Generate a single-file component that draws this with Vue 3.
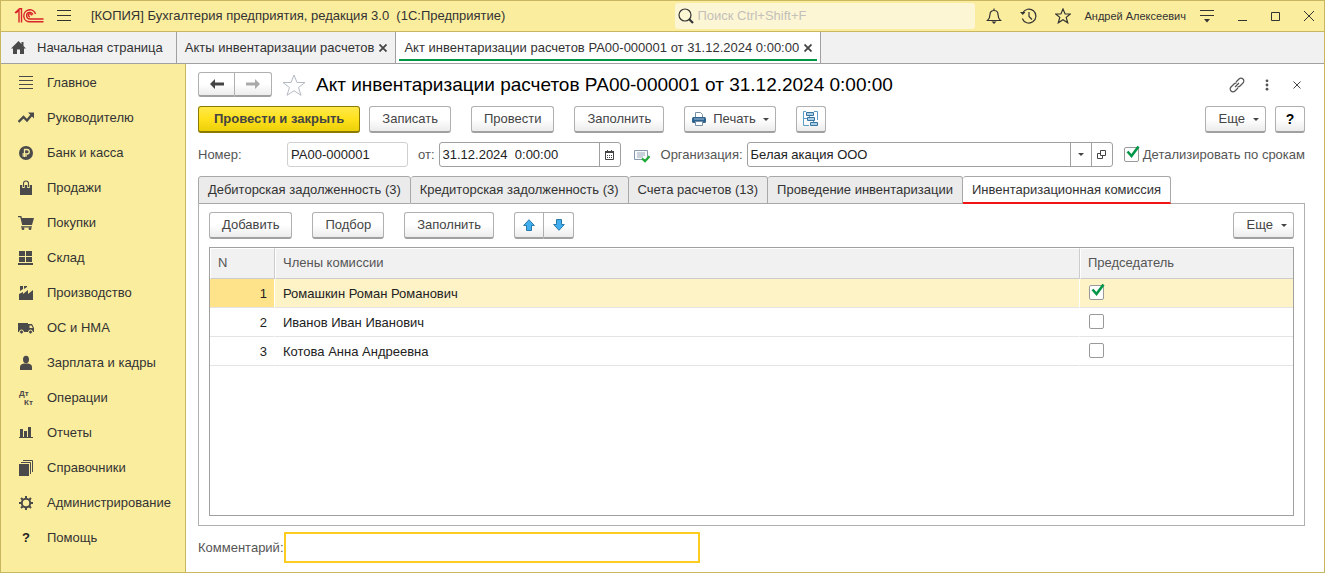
<script setup>
import { ref } from 'vue'

const sections = [
  { title: 'Главное', icon: '<path d="M1 1.5h14M1 5.5h14M1 9.5h14M1 13.5h14" stroke="#4a4a4a" fill="none"/>' },
  { title: 'Руководителю', icon: '<path d="M0.5 12L5.5 7l3.500 3.500L14 4.500" stroke="#4a4a4a" stroke-width="2.400" fill="none"/><path d="M10 2.500h6v6z"/>' },
  { title: 'Банк и касса', icon: '<circle cx="8" cy="8" r="7"/><path d="M6.500 12V4.500H9a2.200 2.200 0 0 1 0 4.500H4.500M4.500 10.800H9" stroke="#fbed9e" stroke-width="1.300" fill="none"/>' },
  { title: 'Продажи', icon: '<path d="M2 5h12v10H2z"/><path d="M5.500 8V3.500Q5.500 1 8 1t2.500 2.500V8" stroke="#fbed9e" stroke-width="2.600" fill="none"/><path d="M5.500 7V3.500Q5.500 1 8 1t2.500 2.500V7" stroke="#4a4a4a" stroke-width="1.100" fill="none"/>' },
  { title: 'Покупки', icon: '<path d="M0 1h3.300l.7 2h12l-2 7H4.200L2.300 2.200H0zM3 11.300h11v1.200H3z"/><circle cx="5" cy="13.700" r="1.400"/><circle cx="12" cy="13.700" r="1.400"/>' },
  { title: 'Склад', icon: '<path d="M1 1h6v5H1zM8 1h6v5H8zM1 7h6v5H1zM8 7h6v5H8zM0 13h15v2H0z"/>' },
  { title: 'Производство', icon: '<path d="M1 15V9l4-2v2l5-4v4l5-4v10zM2 1h3v3L2 6zM6 1h3v1L6 4z"/>' },
  { title: 'ОС и НМА', icon: '<path d="M0 3h10v9H0z"/><path d="M10 4h4l2 4v4h-6z"/><path d="M11.500 5.500h2L14.800 8h-3.300z" fill="#fbed9e"/><g stroke="#fbed9e" stroke-width="1"><circle cx="3.500" cy="12" r="2"/><circle cx="12.500" cy="12" r="2"/></g>' },
  { title: 'Зарплата и кадры', icon: '<ellipse cx="8" cy="4.500" rx="3" ry="3.800"/><path d="M2 15v-3q0-3 4-3.500h4q4 .5 4 3.500v3z"/>' },
  { title: 'Операции', icon: '<text x="1" y="6" font-size="8" font-weight="bold" font-family="Liberation Sans, sans-serif">Дт</text><text x="6" y="15" font-size="8" font-weight="bold" font-family="Liberation Sans, sans-serif">Кт</text>' },
  { title: 'Отчеты', icon: '<path d="M2 4h3v8H2zM6 6h3v6H6zM10 2h3v10h-3zM1 12h14v1H1z"/>' },
  { title: 'Справочники', icon: '<path d="M1 4h10v12H1z"/><path d="M3 2.500h9.500V14M5 .5h9.500V12" stroke="#4a4a4a" fill="none"/>' },
  { title: 'Администрирование', icon: '<circle cx="8" cy="8" r="4.200" stroke="#4a4a4a" stroke-width="2" fill="none"/><path d="M8 1v2.500M8 12.500V15M1 8h2.500M12.500 8H15M3 3l2 2M11 11l2 2M13 3l-2 2M5 11l-2 2" stroke="#4a4a4a" stroke-width="2" fill="none"/>' },
  { title: 'Помощь', glyph: '?' },
]

const tabs = [
  'Дебиторская задолженность (3)',
  'Кредиторская задолженность (3)',
  'Счета расчетов (13)',
  'Проведение инвентаризации',
  'Инвентаризационная комиссия',
]
const activeTab = ref(4)

const members = ref([
  { name: 'Ромашкин Роман Романович', chair: true },
  { name: 'Иванов Иван Иванович', chair: false },
  { name: 'Котова Анна Андреевна', chair: false },
])
const selected = ref(0)

const number = ref('РА00-000001')
const date = ref('31.12.2024  0:00:00')
const organization = ref('Белая акация ООО')
const detailed = ref(true)
const comment = ref('')
const search = ref('')
</script>

<template>
  <div class="window">
    <header class="topbar">
      <svg class="logo" width="30" height="16" viewBox="0 0 30 16" fill="none" stroke="#d8232a" stroke-width="1.400">
        <path d="M1 4.500h1.500L5 2v12.500M7.500 14.500V.8H5.500L1 5" />
        <path d="M21.500 6A6 6 0 1 0 16 13.800h13.500M19 6.500A3.300 3.300 0 1 0 16 11h13.500" />
        <path d="M17.500 7.500a1.500 1.500 0 1 0-1.500 1.200" />
      </svg>
      <button class="icon-btn menu" aria-label="Меню">
        <svg width="14" height="12" viewBox="0 0 14 12" stroke="#333"><path d="M0 .5h14M0 5.500h14M0 10.500h14" /></svg>
      </button>
      <div class="app-title">[КОПИЯ] Бухгалтерия предприятия, редакция 3.0&nbsp; (1С:Предприятие)</div>
      <label class="search">
        <svg width="16" height="16" viewBox="0 0 16 16" fill="none" stroke="#333"><circle cx="7" cy="7" r="6" stroke-width="1.200" /><path d="M11 11l4 4" stroke-width="2.200" /></svg>
        <input v-model="search" type="text" aria-label="Поиск" placeholder="Поиск Ctrl+Shift+F">
      </label>
      <div class="top-actions">
        <button class="icon-btn" aria-label="Уведомления">
          <svg width="16" height="16" viewBox="0 0 16 16" fill="none" stroke="#333" stroke-width="1.200"><path d="M1.500 12.500c2-2 2.500-3 2.500-6C4 4 5.500 2.500 8 2.500S12 4 12 6.500c0 3 .5 4 2.500 6zM8 .5v2" /><path d="M5.500 13.500h5L8 16z" fill="#333" stroke="none" /></svg>
        </button>
        <button class="icon-btn" aria-label="История">
          <svg width="17" height="16" viewBox="0 0 17 16" fill="none" stroke="#333" stroke-width="1.200"><path d="M2.600 5A7 7 0 1 1 2.300 10.500M9 4v4.500l3 3" /><path d="M0 4h5.500L2.800 7z" fill="#333" stroke="none" /></svg>
        </button>
        <button class="icon-btn" aria-label="Избранное">
          <svg width="16" height="16" viewBox="0 0 16 16" fill="none" stroke="#333" stroke-width="1.200"><path d="M8 1l2.100 5H15.300L11.200 9.400l1.500 5.400L8 11.700l-4.700 3.100 1.500-5.400L.7 6h5.200z" /></svg>
        </button>
      </div>
      <button class="icon-btn user">Андрей Алексеевич</button>
      <div class="window-actions">
        <button class="icon-btn" aria-label="Настройки">
          <svg width="14" height="14" viewBox="0 0 14 14"><path d="M0 1.500h14M0 6.500h14" stroke="#333" /><path d="M4 10h6l-3 3.500z" fill="#333" /></svg>
        </button>
        <button class="icon-btn" aria-label="Свернуть">
          <svg width="9" height="10" viewBox="0 0 9 10"><path d="M0 9.500h9" stroke="#333" /></svg>
        </button>
        <button class="icon-btn" aria-label="Развернуть">
          <svg width="9" height="9" viewBox="0 0 9 9"><path d="M.5.500h8v8h-8z" fill="none" stroke="#333" /></svg>
        </button>
        <button class="icon-btn" aria-label="Закрыть">
          <svg width="10" height="10" viewBox="0 0 10 10"><path d="M0 0l10 10M10 0L0 10" stroke="#333" /></svg>
        </button>
      </div>
    </header>

    <nav class="pages">
      <button class="page home">
        <svg width="16" height="14" viewBox="0 0 16 14" fill="#4a4a4a"><path d="M7.500 0L0 7.500h2V13h4V8.500h3V13h4V7.500h2L12.500 5V1h-2v2z" /></svg>
        <span>Начальная страница</span>
      </button>
      <div class="page">
        <button class="page-title">Акты инвентаризации расчетов</button>
        <button class="close" aria-label="Закрыть вкладку"><svg width="8" height="8" viewBox="0 0 8 8"><path d="M.5.500l7 7M7.500.500l-7 7" stroke="#444" stroke-width="1.800" /></svg></button>
      </div>
      <div class="page current">
        <button class="page-title">Акт инвентаризации расчетов РА00-000001 от 31.12.2024 0:00:00</button>
        <button class="close" aria-label="Закрыть вкладку"><svg width="8" height="8" viewBox="0 0 8 8"><path d="M.5.500l7 7M7.500.500l-7 7" stroke="#444" stroke-width="1.800" /></svg></button>
      </div>
    </nav>

    <div class="body">
      <aside class="sidebar">
        <a v-for="s in sections" :key="s.title" href="#" class="section">
          <span v-if="s.glyph" class="glyph">{{ s.glyph }}</span>
          <svg v-else width="16" height="16" viewBox="0 0 16 16" fill="#4a4a4a" v-html="s.icon"></svg>
          <span>{{ s.title }}</span>
        </a>
      </aside>

      <main class="form">
        <div class="form-head">
          <div class="pair nav">
            <button class="btn" aria-label="Назад"><svg width="14" height="10" viewBox="0 0 14 10" fill="#444"><path d="M0 5l5-5v3.500h9v3H5V10z" /></svg></button>
            <button class="btn" aria-label="Вперед"><svg width="14" height="10" viewBox="0 0 14 10" fill="#aaa"><path d="M14 5L9 0v3.500H0v3h9V10z" /></svg></button>
          </div>
          <button class="icon-btn fav" aria-label="В избранное">
            <svg width="24" height="22" viewBox="0 0 24 22" fill="none" stroke="#b4bac2"><path d="M12 1l3 7.500h8l-6.500 5L19 21.300l-7-4.600-7 4.600 2.500-7.800L1 8.500h8z" /></svg>
          </button>
          <h1>Акт инвентаризации расчетов РА00-000001 от 31.12.2024 0:00:00</h1>
          <div class="head-actions">
            <button class="icon-btn" aria-label="Ссылка">
              <svg width="16" height="16" viewBox="0 0 16 16" fill="none" stroke="#555" stroke-width="1.200"><path d="M7 5l3-3a2.800 2.800 0 0 1 4 4l-3 3a2.800 2.800 0 0 1-2.500.8M9 11l-3 3a2.800 2.800 0 0 1-4-4l3-3a2.800 2.800 0 0 1 2.500-.8M6 10l4-4" /></svg>
            </button>
            <button class="icon-btn" aria-label="Действия">
              <svg width="4" height="12" viewBox="0 0 4 12" fill="#555"><circle cx="2" cy="1.800" r="1.400" /><circle cx="2" cy="6" r="1.400" /><circle cx="2" cy="10.200" r="1.400" /></svg>
            </button>
            <button class="icon-btn" aria-label="Закрыть форму">
              <svg width="8" height="8" viewBox="0 0 8 8"><path d="M.5.500l7 7M7.500.500l-7 7" stroke="#444" /></svg>
            </button>
          </div>
        </div>

        <div class="toolbar">
          <button class="btn primary">Провести и закрыть</button>
          <button class="btn next">Записать</button>
          <button class="btn">Провести</button>
          <button class="btn">Заполнить</button>
          <button class="btn print">
            <svg width="14" height="14" viewBox="0 0 14 14"><path d="M3.500 5V.5h5l2 2V5" fill="#fff" stroke="#7890a5" /><rect y="5" width="14" height="6" rx="1.500" fill="#2f638f" /><path d="M2 7h10" stroke="#9fc0da" /><path d="M3.500 9.500h7v4h-7z" fill="#fff" stroke="#7890a5" /></svg>
            Печать <i class="caret"></i>
          </button>
          <button class="btn square" aria-label="Структура подчиненности">
            <svg width="16" height="16" viewBox="0 0 16 16" fill="#a9cfe8" stroke="#39749f"><path d="M3 .5H.5v14H6M11 .5h3.500V9M.5 7.500H4M6.500 4v2M10.500 9v2" fill="none" stroke="#5b9cc8" /><path d="M3.500 1.500h7v3h-7zM4.500 6.500h7v3h-7zM7.500 11.500h7v3h-7z" /></svg>
          </button>
          <button class="btn more">Еще <i class="caret"></i></button>
          <button class="btn square help" aria-label="Справка">?</button>
        </div>

        <div class="fields">
          <label class="caption" for="number">Номер:</label>
          <div class="box number"><input id="number" v-model="number" type="text"></div>
          <label for="date" class="from">от:</label>
          <div class="box date">
            <input id="date" v-model="date" type="text">
            <button aria-label="Календарь"><svg width="9" height="10" viewBox="0 0 9 10" fill="none" stroke="#444"><path d="M.5 1.500h8v8h-8z" /><path d="M0 2h9" stroke-width="2" /><path d="M2 5.500h5M2 7.500h5" stroke-dasharray="1 1" /><path d="M2.500 0v2M6.500 0v2" /></svg></button>
          </div>
          <svg class="posted" width="17" height="14" viewBox="0 0 17 14" fill="none"><path d="M.5 1.500h13v9H.5z" fill="#f8fafc" stroke="#8798aa" /><path d="M3 4h8M3 6h8M3 8h6" stroke="#9aa8b8" /><path d="M8 9.500l3 2.800 4.500-5" stroke="#1faa35" stroke-width="2.200" /></svg>
          <label for="org" class="org-label">Организация:</label>
          <div class="box org">
            <input id="org" v-model="organization" type="text">
            <button aria-label="Выбрать"><i class="caret"></i></button>
            <button aria-label="Открыть"><svg width="9" height="9" viewBox="0 0 9 9" fill="none" stroke="#444"><path d="M3.500.500h5v5h-5zM3 3.500H.5v5h5V6" /></svg></button>
          </div>
          <label class="detail">
            <span class="check"><input v-model="detailed" type="checkbox"><svg v-if="detailed" width="15" height="14" viewBox="0 0 15 14"><path d="M2.500 6.500l4 4.500L13.500 1.500" fill="none" stroke="#009646" stroke-width="2.600" /></svg></span>
            Детализировать по срокам
          </label>
        </div>

        <div class="tabs" role="tablist">
          <button v-for="(t, i) in tabs" :key="t" role="tab" class="tab" :class="{ active: i === activeTab }" :aria-selected="i === activeTab" @click="activeTab = i">{{ t }}</button>
        </div>

        <section class="panel">
          <div class="toolbar">
            <button class="btn">Добавить</button>
            <button class="btn">Подбор</button>
            <button class="btn">Заполнить</button>
            <div class="pair">
              <button class="btn" aria-label="Вверх"><svg width="12" height="12" viewBox="0 0 12 12" fill="#41aef0" stroke="#2878a8"><path d="M6 .7L11.300 6.500H8.500v5h-5v-5H.7z" /></svg></button>
              <button class="btn" aria-label="Вниз"><svg width="12" height="12" viewBox="0 0 12 12" fill="#41aef0" stroke="#2878a8"><path d="M6 11.300L11.300 5.500H8.500v-5h-5v5H.7z" /></svg></button>
            </div>
            <button class="btn more">Еще <i class="caret"></i></button>
          </div>
          <div class="grid">
            <table>
              <thead>
                <tr><th class="n">N</th><th>Члены комиссии</th><th class="chair">Председатель</th></tr>
              </thead>
              <tbody>
                <tr v-for="(m, i) in members" :key="m.name" :class="{ selected: i === selected }" @click="selected = i">
                  <td class="n">{{ i + 1 }}</td>
                  <td>{{ m.name }}</td>
                  <td class="chair">
                    <span class="check"><input v-model="m.chair" type="checkbox" :aria-label="'Председатель: ' + m.name"><svg v-if="m.chair" width="15" height="14" viewBox="0 0 15 14"><path d="M2.500 6.500l4 4.500L13.500 1.500" fill="none" stroke="#009646" stroke-width="2.600" /></svg></span>
                  </td>
                </tr>
              </tbody>
            </table>
          </div>
        </section>

        <div class="comment">
          <label for="comment">Комментарий:</label>
          <input id="comment" v-model="comment" type="text">
        </div>
      </main>
    </div>
  </div>
</template>

<style>
body { margin: 0; }
</style>

<style scoped>
* { box-sizing: border-box; }
.window {
  min-height: 100vh;
  display: flex;
  flex-direction: column;
  border: 1px solid #c9b75f;
  background: #fff;
  color: #333;
  font: 13px/16px "Liberation Sans", Arial, sans-serif;
}
button, input { font: inherit; color: inherit; margin: 0; }
button { white-space: nowrap; cursor: pointer; }
svg { display: block; flex: none; }
.icon-btn, .page, .page button, .box button { border: 0; padding: 0; background: none; }

.topbar {
  display: flex;
  align-items: center;
  height: 31px;
  padding-right: 10px;
  background: #fbed9e;
  border-bottom: 1px solid #c9b75f;
}
.logo { margin-left: 13px; }
.menu { margin-left: 13px; }
.app-title { margin-left: 20px; flex: 1; white-space: nowrap; }
.search {
  display: flex;
  align-items: center;
  gap: 3px;
  width: 300px;
  height: 26px;
  padding-left: 3px;
  border-radius: 3px;
  background: #fdf6d5;
}
.search input { flex: 1; min-width: 0; border: 0; padding: 0; background: none; outline: 0; }
.search input::placeholder { color: #c2c0b8; opacity: 1; }
.top-actions { display: flex; gap: 18px; margin-left: 11px; }
.user { margin-left: 13px; font-size: 11px; }
.window-actions { display: flex; align-items: center; gap: 24px; margin-left: 14px; }

.pages {
  display: flex;
  height: 32px;
  background: #f1f1f1;
  border-bottom: 1px solid #a0a0a0;
}
.page {
  display: flex;
  align-items: center;
  gap: 5px;
  padding: 0 8px;
  border-right: 1px solid #a0a0a0;
}
.page.home { gap: 10px; padding: 0 13px 0 10px; border-right: 1px solid #a0a0a0; }
.page.current {
  background: linear-gradient(#009646, #009646) center bottom 2px / calc(100% - 6px) 2px no-repeat #fff;
}

.body { flex: 1; display: flex; }
.sidebar {
  width: 185px;
  padding-top: 1px;
  background: #fbed9e;
  border-right: 1px solid #c9b75f;
}
.section {
  display: flex;
  align-items: center;
  gap: 13px;
  height: 35px;
  padding-left: 17px;
  color: #333;
  text-decoration: none;
  white-space: nowrap;
}
.glyph { width: 16px; text-align: center; font-weight: bold; color: #222; }

.form {
  flex: 1;
  min-width: 0;
  display: flex;
  flex-direction: column;
  padding: 8px 19px 9px 12px;
}
.form-head { display: flex; align-items: center; height: 25px; }
.fav { margin: 0 10px; }
h1 { margin: 0; flex: 1; font-size: 19px; line-height: 24px; font-weight: normal; color: #000; white-space: nowrap; }
.head-actions { display: flex; align-items: center; gap: 14px; }
.head-actions button { display: flex; justify-content: center; width: 16px; }

.btn {
  display: flex;
  align-items: center;
  justify-content: center;
  height: 27px;
  padding: 0 12px;
  border: 1px solid #b0b0b0;
  border-bottom: 2px solid #a0a0a0;
  border-radius: 3px;
  background: linear-gradient(#fff 50%, #ececec);
  color: #444;
}
.pair { display: flex; }
.pair .btn { width: 30px; padding: 0; }
.pair .btn + .btn { border-left: 0; border-radius: 0 3px 3px 0; }
.pair .btn:first-child { border-radius: 3px 0 0 3px; }
.pair.nav .btn { width: 37px; height: 25px; }
.toolbar { display: flex; gap: 20px; }
.form > .toolbar { margin-top: 9px; }
.primary {
  padding: 0 15px;
  border-color: #8c7a00;
  background: linear-gradient(#ffe84a, #ffe11c 50%, #ecd00a);
  font-weight: bold;
}
.next { margin-left: -11px; }
.print { gap: 7px; padding: 0 6px 0 7px; }
.square { width: 30px; padding: 0; }
.help { margin-left: -11px; font-weight: bold; font-size: 14px; color: #000; }
.more { margin-left: auto; gap: 8px; padding: 0 6px 0 13px; }
.caret { border: 3px solid transparent; border-top-color: #444; border-bottom: 0; }

.fields { display: flex; align-items: center; height: 25px; margin-top: 9px; color: #555; white-space: nowrap; }
.caption { width: 89px; }
.box {
  display: flex;
  height: 25px;
  border: 1px solid #a0a0a0;
  border-radius: 3px;
  color: #222;
}
.box input { flex: 1; min-width: 0; border: 0; padding: 0 3px; background: none; outline: 0; }
.box button {
  display: flex;
  align-items: center;
  justify-content: center;
  width: 21px;
  border-left: 1px solid #a0a0a0;
}
.number { width: 121px; border-color: #d0d0d0; }
.from { margin: 0 4px 0 10px; }
.date { width: 182px; }
.posted { margin: 2px 10px 0 13px; }
.org-label { margin-right: 4px; }
.org { flex: 1; }
.detail { display: flex; align-items: center; gap: 4px; margin-left: 11px; }
.check { position: relative; display: block; width: 15px; height: 15px; }
.check input {
  appearance: none;
  display: block;
  width: 15px;
  height: 15px;
  border: 1px solid #999;
  border-radius: 2px;
  background: #fff;
}
.check svg { position: absolute; left: 1px; top: -2px; pointer-events: none; }

.tabs { display: flex; margin-top: 9px; }
.tabs::after { content: ""; flex: 1; border-bottom: 1px solid #b0b0b0; }
.tab {
  height: 28px;
  padding: 0 9px;
  border: 1px solid #a8a8a8;
  border-left: 0;
  border-radius: 3px 3px 0 0;
  background: #ebebeb;
  color: #333;
}
.tab:first-child { border-left: 1px solid #a8a8a8; }
.tab.active { background: #fff; border-bottom: 2px solid #f01414; }
.panel {
  flex: 1;
  display: flex;
  flex-direction: column;
  gap: 8px;
  padding: 8px 10px 9px;
  border: 1px solid #b0b0b0;
  border-top: 0;
}
.grid { flex: 1; border: 1px solid #a0a0a0; }
table { width: 100%; border-collapse: separate; border-spacing: 0; table-layout: fixed; }
th, td { text-align: left; font-weight: normal; }
th {
  height: 31px;
  padding: 0 7px 2px;
  background: #f1f1f1;
  border: 1px solid #fff;
  border-right-color: #ccc;
  border-bottom-color: #ccc;
  color: #555;
}
td {
  height: 29px;
  padding: 2px 8px 0;
  border-bottom: 1px solid #e4e4e4;
  border-right: 1px solid transparent;
  color: #222;
}
th:last-child, td:last-child { border-right: 0; }
.n { width: 65px; }
td.n { text-align: right; padding-right: 7px; }
.chair { width: 213px; }
td.chair { padding: 0 0 2px 9px; }
.selected td { background: #fef2c7; background-clip: padding-box; }
.selected td.n { background: #ffe38a; background-clip: padding-box; }

.comment { display: flex; align-items: center; margin-top: 6px; color: #555; }
.comment input { width: 416px; height: 31px; border: 2px solid #fccc1e; padding: 0 6px; outline: 0; color: #222; }
</style>
